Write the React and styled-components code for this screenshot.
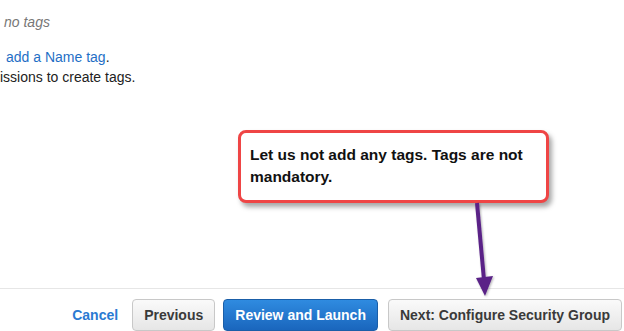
import React from "react";
import styled, { createGlobalStyle } from "styled-components";

const Global = createGlobalStyle`
  html, body { margin: 0; padding: 0; background: #fff; }
  body { font-family: "Liberation Sans", Arial, sans-serif; overflow: hidden; }
`;

const Page = styled.div`
  position: relative;
  width: 624px;
  height: 331px;
  display: flex;
  flex-direction: column;
  overflow: hidden;
`;

const Info = styled.div`
  padding-top: 12px;
  display: flex;
  flex-direction: column;
  font-size: 14px;
  line-height: 20px;
  color: #222;
`;

const Muted = styled.div`
  color: #777;
  font-style: italic;
  padding-left: 4px;
  margin-bottom: 15px;
`;

const Line = styled.div`
  padding-left: ${(p) => p.$indent || 0}px;
  white-space: nowrap;
`;

const Link = styled.span`
  color: #1f6fc6;
`;

const Footer = styled.div`
  margin-top: auto;
  border-top: 1px solid #e6e6e6;
  padding: 10px 2px 0 0;
  display: flex;
  justify-content: flex-end;
  align-items: center;
`;

const Cancel = styled.span`
  color: #2a7ad2;
  font-weight: bold;
  font-size: 14px;
  margin-right: 14px;
`;

const Button = styled.button`
  height: 32px;
  box-sizing: border-box;
  padding: 0 ${(p) => p.$pad}px;
  margin-left: ${(p) => p.$gap || 0}px;
  font-family: "Liberation Sans", Arial, sans-serif;
  font-weight: bold;
  font-size: 14px;
  border-radius: 4px;
  cursor: pointer;
  ${(p) =>
    p.$primary
      ? `
    color: #fff;
    border: 1px solid #1a5ea8;
    background: linear-gradient(#2f8be0, #1a66bd);
  `
      : `
    color: #3a3a3a;
    border: 1px solid #c8c8c8;
    background: linear-gradient(#fafafa, #e6e6e6);
  `}
`;

const Callout = styled.div`
  position: absolute;
  left: 238px;
  top: 130px;
  width: 311px;
  height: 73px;
  box-sizing: border-box;
  border: 3px solid #ef4545;
  border-radius: 8px;
  background: #fff;
  box-shadow: 3px 4px 5px rgba(0, 0, 0, 0.35);
  padding: 11px 8px 0 9px;
  font-weight: bold;
  font-size: 15.5px;
  line-height: 22px;
  color: #111;
`;

const Arrow = styled.svg`
  position: absolute;
  left: 466px;
  top: 200px;
  overflow: visible;
`;

export default function App() {
  return (
    <>
      <Global />
      <Page>
        <Info>
          <Muted>no tags</Muted>
          <Line $indent={6}>
            <Link>add a Name tag</Link>.
          </Line>
          <Line>issions to create tags.</Line>
        </Info>
        <Footer>
          <Cancel>Cancel</Cancel>
          <Button $pad={11}>Previous</Button>
          <Button $primary $pad={11} $gap={8}>
            Review and Launch
          </Button>
          <Button $pad={11} $gap={10}>
            Next: Configure Security Group
          </Button>
        </Footer>
        <Callout>Let us not add any tags. Tags are not mandatory.</Callout>
        <Arrow width="40" height="100" viewBox="0 0 40 100">
          <defs>
            <filter id="sh" x="-50%" y="-20%" width="200%" height="140%">
              <feDropShadow dx="1" dy="1" stdDeviation="1" floodColor="#000" floodOpacity="0.3" />
            </filter>
          </defs>
          <g filter="url(#sh)">
            <line x1="11" y1="3" x2="18" y2="80" stroke="#5a2487" strokeWidth="4" />
            <polygon points="10,78 27,76 19,96" fill="#5a2487" />
          </g>
        </Arrow>
      </Page>
    </>
  );
}
